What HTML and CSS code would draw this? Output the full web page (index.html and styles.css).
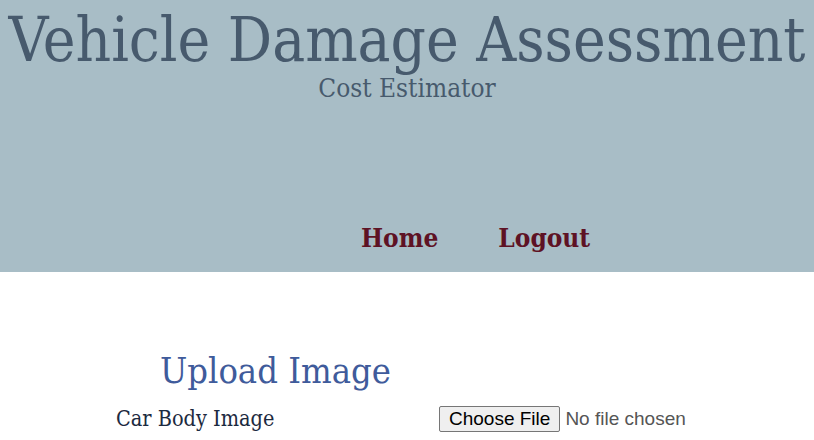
FILE: index.html
```html
<!DOCTYPE html>
<html>
<head>
<meta charset="utf-8">
<link rel="stylesheet" href="styles.css">
</head>
<body>
<header class="top">
  <h1 class="title">Vehicle Damage Assessment</h1>
  <p class="subtitle">Cost Estimator</p>
  <nav class="nav">
    <a class="nav-link" href="#">Home</a>
    <a class="nav-link" href="#">Logout</a>
  </nav>
</header>
<main class="content">
  <h2 class="upload-title">Upload Image</h2>
  <div class="field">
    <label class="field-label">Car Body Image</label>
    <input class="file" type="file">
  </div>
</main>
</body>
</html>
```
FILE: styles.css
```css
html, body { margin: 0; padding: 0; background: #fff; }
body {
  font-family: "DejaVu Serif Condensed", "DejaVu Serif", serif;
  font-stretch: condensed;
}
.top {
  background: #a8bdc6;
  height: 272px;
  padding-top: 5px;
  box-sizing: border-box;
  display: flex;
  flex-direction: column;
  align-items: center;
}
.title {
  margin: 0;
  font-weight: normal;
  font-size: 61.5px;
  line-height: 71px;
  color: #475a6d;
  white-space: nowrap;
}
.subtitle {
  margin: 0;
  font-size: 26px;
  line-height: 24px;
  color: #475a6d;
}
.nav {
  align-self: flex-start;
  margin-top: 123px;
  margin-left: 361px;
  display: flex;
  gap: 60px;
  line-height: 30px;
}
.nav-link {
  font-weight: bold;
  font-size: 26px;
  color: #5e1224;
  text-decoration: none;
}
.content { padding-top: 76px; }
.upload-title {
  margin: 0 0 0 160px;
  font-weight: normal;
  font-size: 36px;
  line-height: 46px;
  color: #3f5b9b;
}
.field {
  display: flex;
  align-items: center;
  margin-top: 12px;
}
.field-label {
  width: 323px;
  margin-left: 116px;
  font-size: 21.5px;
  line-height: 26px;
  color: #1c2a40;
}
.file {
  font-family: "Liberation Sans", Arial, sans-serif;
  font-stretch: normal;
  font-size: 19px;
  color: #555;
}
.file::file-selector-button {
  font: inherit;
  color: #000;
  background: #efefef;
  border: 1px solid #767676;
  border-radius: 2px;
  padding: 1px 9px;
  margin-right: 5px;
}
```
